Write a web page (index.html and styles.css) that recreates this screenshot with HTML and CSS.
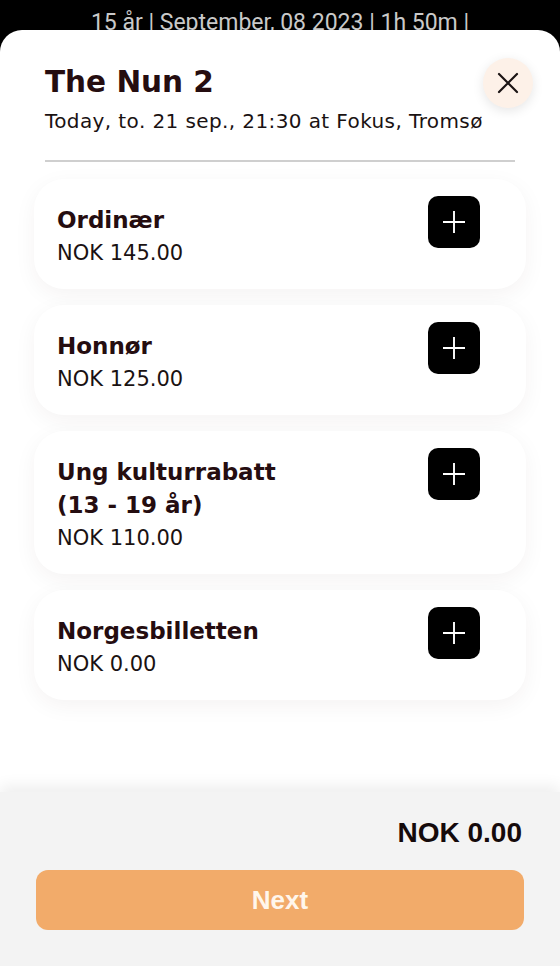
FILE: index.html
```html
<!DOCTYPE html>
<html lang="no">
<head>
<meta charset="utf-8">
<title>The Nun 2 – Billetter</title>
<link rel="stylesheet" href="styles.css">
</head>
<body>
<div class="screen">
  <div class="topbar"><span>15 år | September, 08 2023 | 1h 50m |</span></div>
  <div class="sheet">
    <header class="head">
      <div class="head-text">
        <h1 class="title">The Nun 2</h1>
        <p class="subtitle">Today, to. 21 sep., 21:30 at Fokus, Tromsø</p>
      </div>
      <button class="close" aria-label="Close">
        <svg width="22" height="22" viewBox="0 0 22 22"><path d="M2 2 L20 20 M20 2 L2 20" stroke="#1b1414" stroke-width="2.2" stroke-linecap="round" fill="none"/></svg>
      </button>
    </header>
    <div class="divider"></div>
    <ul class="tickets">
      <li class="card">
        <div class="info"><div class="name">Ordinær</div><div class="price">NOK 145.00</div></div>
        <button class="add" aria-label="Add"><svg width="24" height="24" viewBox="0 0 24 24"><path d="M12 1 V23 M1 12 H23" stroke="#fff" stroke-width="1.9" fill="none"/></svg></button>
      </li>
      <li class="card">
        <div class="info"><div class="name">Honnør</div><div class="price">NOK 125.00</div></div>
        <button class="add" aria-label="Add"><svg width="24" height="24" viewBox="0 0 24 24"><path d="M12 1 V23 M1 12 H23" stroke="#fff" stroke-width="1.9" fill="none"/></svg></button>
      </li>
      <li class="card">
        <div class="info"><div class="name">Ung kulturrabatt<br>(13 - 19 år)</div><div class="price">NOK 110.00</div></div>
        <button class="add" aria-label="Add"><svg width="24" height="24" viewBox="0 0 24 24"><path d="M12 1 V23 M1 12 H23" stroke="#fff" stroke-width="1.9" fill="none"/></svg></button>
      </li>
      <li class="card">
        <div class="info"><div class="name">Norgesbilletten</div><div class="price">NOK 0.00</div></div>
        <button class="add" aria-label="Add"><svg width="24" height="24" viewBox="0 0 24 24"><path d="M12 1 V23 M1 12 H23" stroke="#fff" stroke-width="1.9" fill="none"/></svg></button>
      </li>
    </ul>
    <footer class="footer">
      <div class="total">NOK 0.00</div>
      <button class="next">Next</button>
    </footer>
  </div>
</div>
</body>
</html>
```

FILE: styles.css
```css
* { box-sizing: border-box; }
html, body { margin: 0; padding: 0; }
body {
  background: #000;
  font-family: "DejaVu Sans", "Open Sans", sans-serif;
  color: #22100f;
}
.screen {
  width: 560px;
  height: 966px;
  display: flex;
  flex-direction: column;
  overflow: hidden;
}
.topbar {
  height: 30px;
  overflow: hidden;
  text-align: center;
  color: #c9c9c9;
  font-family: Roboto, "Liberation Sans", sans-serif;
  font-size: 23px;
  line-height: 28px;
  padding-top: 9px;
  flex: none;
  white-space: nowrap;
}
.sheet {
  flex: 1;
  background: #fff;
  border-radius: 22px 22px 0 0;
  display: flex;
  flex-direction: column;
}
.head {
  display: flex;
  justify-content: space-between;
  align-items: flex-start;
  padding: 30px 28px 0 45px;
}
.title {
  margin: 0;
  font-size: 29.5px;
  font-weight: 700;
  line-height: 44px;
  color: #250d10;
}
.subtitle {
  margin: 3px 0 0;
  font-size: 20px;
  letter-spacing: 0.4px;
  line-height: 28px;
  color: #1a1212;
  white-space: nowrap;
}
.close {
  width: 50px;
  height: 50px;
  border: none;
  border-radius: 50%;
  background: #fdf1e8;
  box-shadow: 0 3px 12px rgba(0, 0, 0, 0.10);
  display: flex;
  align-items: center;
  justify-content: center;
  padding: 0;
  margin-top: -2px;
  flex: none;
}
.divider {
  height: 1.5px;
  background: #cfcfcf;
  margin: 25px 45px 0;
}
.tickets {
  list-style: none;
  margin: 0;
  padding: 17px 34px 0;
  display: flex;
  flex-direction: column;
  gap: 16px;
}
.card {
  background: #fff;
  border-radius: 30px;
  box-shadow: 0 6px 22px rgba(60, 20, 20, 0.05);
  display: flex;
  justify-content: space-between;
  align-items: flex-start;
  padding: 17px 46px 20px 23px;
}
.info { padding-top: 8px; }
.name {
  font-size: 23px;
  font-weight: 700;
  line-height: 33px;
  color: #250d10;
}
.price {
  font-size: 21px;
  line-height: 32px;
  color: #1a1212;
}
.add {
  width: 52px;
  height: 52px;
  border: none;
  border-radius: 10px;
  background: #000;
  display: flex;
  align-items: center;
  justify-content: center;
  padding: 0;
  flex: none;
}
.footer {
  margin-top: auto;
  height: 174px;
  background: #f3f3f3;
  box-shadow: 0 -6px 14px rgba(0, 0, 0, 0.07);
  padding: 24px 36px 0;
  display: flex;
  flex-direction: column;
  align-items: stretch;
}
.total {
  text-align: right;
  font-family: "Liberation Sans", Arial, sans-serif;
  font-weight: 700;
  font-size: 28px;
  line-height: 34px;
  color: #150a0b;
  padding-right: 2px;
}
.next {
  margin-top: 20px;
  height: 60px;
  border: none;
  border-radius: 12px;
  background: #f2ab6a;
  color: #fff6ec;
  font-family: "Liberation Sans", Arial, sans-serif;
  font-weight: 700;
  font-size: 26px;
}
```
